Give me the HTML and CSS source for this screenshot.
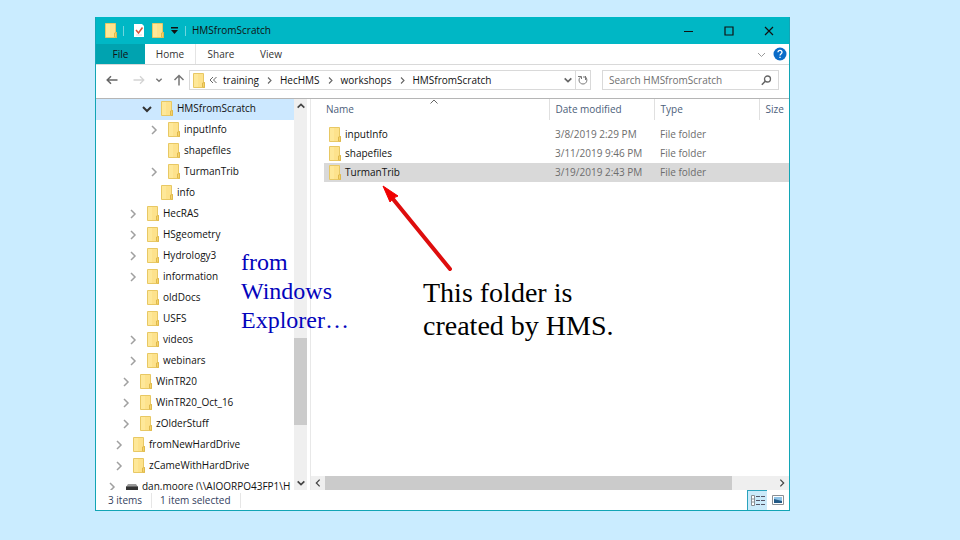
FILE: index.html
```html
<!DOCTYPE html>
<html lang="en">
<head>
<meta charset="utf-8">
<title>HMSfromScratch</title>
<link rel="stylesheet" href="styles.css">
</head>
<body>
<svg class="defs" aria-hidden="true">
  <symbol id="folder" viewBox="0 0 12 15">
    <path d="M.5 .5H10.5V9.500H11.500V14.500H.5Z" fill="#fde28c" stroke="#e8c864"/>
    <path d="M1 1H5V14H1Z" fill="#fee899"/>
    <path d="M9.500 14V10L11.500 9.500V14.500Z" fill="#f7d56c" stroke="#dfb94c"/>
  </symbol>
  <symbol id="right" viewBox="0 0 12 12"><path d="M4 2L8 6L4 10" fill="none" stroke="currentColor" stroke-width="1.500"/></symbol>
  <symbol id="down" viewBox="0 0 12 12"><path d="M2 4L6 8L10 4" fill="none" stroke="currentColor" stroke-width="2"/></symbol>
</svg>
<main class="window">
  <header class="titlebar">
    <svg class="folder"><use href="#folder"/></svg>
    <span class="bar"></span>
    <button class="quick" aria-label="Properties"><svg width="10" height="13" viewBox="0 0 10 13"><path d="M0 0H8L10 2V13H0Z" fill="#fff"/><path d="M2 6L4.500 9L8.500 3.500" fill="none" stroke="#d8563c" stroke-width="1.500"/><path d="M2 11H8" stroke="#ddd"/></svg></button>
    <button class="quick" aria-label="New folder"><svg class="folder"><use href="#folder"/></svg></button>
    <button class="quick more" aria-label="Customize toolbar"><svg width="7" height="7" viewBox="0 0 7 7"><path d="M0 0H7V1.500H0ZM0 3H7L3.500 7Z" fill="#111"/></svg></button>
    <span class="bar"></span>
    <h1>HMSfromScratch</h1>
    <div class="controls">
      <button aria-label="Minimize"><svg width="10" height="10" viewBox="0 0 10 10"><path d="M0 5.500H9" stroke="#111"/></svg></button>
      <button aria-label="Maximize"><svg width="10" height="10" viewBox="0 0 10 10"><path d="M1 1H9V9H1Z" fill="none" stroke="#111" stroke-width="1.200"/></svg></button>
      <button aria-label="Close"><svg width="10" height="10" viewBox="0 0 10 10"><path d="M1 1L9 9M9 1L1 9" stroke="#111" stroke-width="1.200"/></svg></button>
    </div>
  </header>

  <nav class="tabs" aria-label="Ribbon">
    <button class="tab file">File</button>
    <button class="tab home">Home</button>
    <button class="tab">Share</button>
    <button class="tab">View</button>
    <button class="expand" aria-label="Expand ribbon"><svg width="9" height="9" viewBox="0 0 9 9"><path d="M1 3L4.500 6.500L8 3" fill="none" stroke="#999"/></svg></button>
    <button class="help" aria-label="Help"><svg width="14" height="14" viewBox="0 0 14 14"><circle cx="7" cy="7" r="6.500" fill="#0a6cc8"/><path d="M5 5.200C5 2.700 9 2.700 9 5.200C9 6.600 7 6.800 7 8.600M7 9.700V11" fill="none" stroke="#fff" stroke-width="1.300"/></svg></button>
  </nav>

  <div class="address-row">
    <div class="history">
      <button aria-label="Back"><svg width="12" height="12" viewBox="0 0 12 12"><path d="M11.500 6H1.500M5 2.200L1.200 6L5 9.800" fill="none" stroke="#666" stroke-width="1.500"/></svg></button>
      <button aria-label="Forward"><svg width="12" height="12" viewBox="0 0 12 12"><path d="M.5 6H10.500M7 2.200L10.800 6L7 9.800" fill="none" stroke="#d4d4d4" stroke-width="1.300"/></svg></button>
      <button aria-label="Recent" class="recent"><svg width="8" height="8" viewBox="0 0 12 12"><use href="#down"/></svg></button>
      <button aria-label="Up"><svg width="12" height="12" viewBox="0 0 12 12"><path d="M6 11.500V1.500M1.500 6L6 1.500L10.500 6" fill="none" stroke="#777" stroke-width="1.500"/></svg></button>
    </div>
    <div class="address">
      <svg class="folder"><use href="#folder"/></svg>
      <svg class="ellipsis" width="8" height="8" viewBox="0 0 8 8"><path d="M4 1L1 4L4 7M7.500 1L4.500 4L7.500 7" fill="none" stroke="#666"/></svg>
      <a href="#">training</a><svg class="crumb"><use href="#right"/></svg>
      <a href="#">HecHMS</a><svg class="crumb"><use href="#right"/></svg>
      <a href="#">workshops</a><svg class="crumb"><use href="#right"/></svg>
      <a href="#">HMSfromScratch</a>
      <button class="drop" aria-label="Previous locations"><svg width="10" height="10"><use href="#down"/></svg></button>
      <button class="refresh" aria-label="Refresh"><svg width="10" height="10" viewBox="0 0 10 10"><path d="M3 1.500C-.5 4 1 9 5 9C9 9 10 4 7.500 2H5M7.500 1V5M0 1.500H3.500V4" fill="none" stroke="#777"/></svg></button>
    </div>
    <div class="search">
      <input type="text" aria-label="Search" placeholder="Search HMSfromScratch">
      <svg width="11" height="11" viewBox="0 0 11 11"><circle cx="6.500" cy="4" r="3" fill="none" stroke="#666" stroke-width="1.300"/><path d="M4.500 6L.8 9.800" stroke="#666" stroke-width="1.600"/></svg>
    </div>
  </div>

  <div class="panes">
    <ul class="tree">
      <li class="l5 current"><svg class="chev"><use href="#down"/></svg><svg class="folder"><use href="#folder"/></svg>HMSfromScratch</li>
      <li class="l6"><svg class="chev"><use href="#right"/></svg><svg class="folder"><use href="#folder"/></svg>inputInfo</li>
      <li class="l6"><svg class="chev"></svg><svg class="folder"><use href="#folder"/></svg>shapefiles</li>
      <li class="l6"><svg class="chev"><use href="#right"/></svg><svg class="folder"><use href="#folder"/></svg>TurmanTrib</li>
      <li class="l5"><svg class="chev"></svg><svg class="folder"><use href="#folder"/></svg>info</li>
      <li class="l3"><svg class="chev"><use href="#right"/></svg><svg class="folder"><use href="#folder"/></svg>HecRAS</li>
      <li class="l3"><svg class="chev"><use href="#right"/></svg><svg class="folder"><use href="#folder"/></svg>HSgeometry</li>
      <li class="l3"><svg class="chev"><use href="#right"/></svg><svg class="folder"><use href="#folder"/></svg>Hydrology3</li>
      <li class="l3"><svg class="chev"><use href="#right"/></svg><svg class="folder"><use href="#folder"/></svg>information</li>
      <li class="l3"><svg class="chev"></svg><svg class="folder"><use href="#folder"/></svg>oldDocs</li>
      <li class="l3"><svg class="chev"></svg><svg class="folder"><use href="#folder"/></svg>USFS</li>
      <li class="l3"><svg class="chev"><use href="#right"/></svg><svg class="folder"><use href="#folder"/></svg>videos</li>
      <li class="l3"><svg class="chev"><use href="#right"/></svg><svg class="folder"><use href="#folder"/></svg>webinars</li>
      <li class="l2"><svg class="chev"><use href="#right"/></svg><svg class="folder"><use href="#folder"/></svg>WinTR20</li>
      <li class="l2"><svg class="chev"><use href="#right"/></svg><svg class="folder"><use href="#folder"/></svg>WinTR20_Oct_16</li>
      <li class="l2"><svg class="chev"><use href="#right"/></svg><svg class="folder"><use href="#folder"/></svg>zOlderStuff</li>
      <li class="l1"><svg class="chev"><use href="#right"/></svg><svg class="folder"><use href="#folder"/></svg>fromNewHardDrive</li>
      <li class="l1"><svg class="chev"><use href="#right"/></svg><svg class="folder"><use href="#folder"/></svg>zCameWithHardDrive</li>
      <li class="l0"><svg class="chev"><use href="#right"/></svg><svg class="drive" viewBox="0 0 12 6"><path d="M2 0H10L12 3H0Z" fill="#999"/><path d="M0 2.500H12V6H0Z" fill="#333"/></svg>dan.moore (\\AIOORPO43FP1\H</li>
    </ul>
    <div class="vscroll">
      <button aria-label="Scroll up"><svg class="flip" width="10" height="10"><use href="#down"/></svg></button>
      <span class="v-before"></span><span class="v-thumb"></span><span class="v-after"></span>
      <button aria-label="Scroll down"><svg width="10" height="10"><use href="#down"/></svg></button>
    </div>
    <section class="files">
      <table>
        <colgroup><col class="c-name"><col class="c-date"><col class="c-type"><col class="c-size"></colgroup>
        <thead><tr><th>Name<svg class="sort" width="8" height="5" viewBox="0 0 8 5"><path d="M.5 4.500L4 1L7.500 4.500" fill="none" stroke="#666"/></svg></th><th>Date modified</th><th>Type</th><th>Size</th></tr></thead>
        <tbody>
          <tr><td><span class="entry"><svg class="folder"><use href="#folder"/></svg>inputInfo</span></td><td>3/8/2019 2:29 PM</td><td>File folder</td><td></td></tr>
          <tr><td><span class="entry"><svg class="folder"><use href="#folder"/></svg>shapefiles</span></td><td>3/11/2019 9:46 PM</td><td>File folder</td><td></td></tr>
          <tr class="selected"><td><span class="entry"><svg class="folder"><use href="#folder"/></svg>TurmanTrib</span></td><td>3/19/2019 2:43 PM</td><td>File folder</td><td></td></tr>
        </tbody>
      </table>
      <div class="hscroll">
        <button aria-label="Scroll left"><svg class="flip" width="10" height="10"><use href="#right"/></svg></button>
        <span class="h-thumb"></span><span class="h-after"></span>
        <button aria-label="Scroll right"><svg width="10" height="10"><use href="#right"/></svg></button>
      </div>
    </section>
  </div>

  <footer class="status">
    <span class="count">3 items</span><span class="picked">1 item selected</span>
    <button class="view on" aria-label="Details view"><svg width="14" height="11" viewBox="0 0 14 11"><path d="M.5 .5H3.500V10.500H.5ZM.5 4H3.500M.5 7H3.500" fill="#fff" stroke="#8a8f94"/><path d="M5 1.500H14M5 5.500H14M5 9.500H14" stroke="#556" stroke-dasharray="4 1"/></svg></button>
    <button class="view" aria-label="Thumbnail view"><svg width="12" height="10" viewBox="0 0 12 10"><path d="M.5 .5H11.500V9.500H.5Z" fill="#fff" stroke="#8a8f94"/><path d="M2 2H10V8H2Z" fill="#8fc4e8"/><path d="M2 4L6 5L10 6V8H2Z" fill="#245a86"/></svg></button>
  </footer>

  <p class="note source">from<br>Windows<br>Explorer…</p>
  <p class="note remark">This folder is<br>created by HMS.</p>
  <svg class="arrow" width="72" height="88" viewBox="0 0 72 88" aria-hidden="true"><path d="M10 13L67 83" stroke="#de0d0d" stroke-width="4" stroke-linecap="round"/><path d="M0 0L15 10Q10 11 7 16Z" fill="#f00000" stroke="#f00000"/></svg>
</main>
</body>
</html>
```
FILE: styles.css
```css
* { box-sizing: border-box; }

body {
  margin: 0;
  height: 100vh;
  padding: 17px 170px 29px 95px;
  background: #caecff;
  color: #111;
  font: 10px/15px "Open Sans", "Noto Sans", sans-serif;
}

.defs { position: absolute; width: 0; height: 0; }
svg { flex: none; overflow: visible; }
h1, p, ul { margin: 0; padding: 0; }
a { color: inherit; text-decoration: none; }

button {
  display: flex;
  align-items: center;
  justify-content: center;
  flex: none;
  margin: 0;
  padding: 0;
  border: 0;
  background: none;
  color: inherit;
  font: inherit;
}

.folder { width: 12px; height: 15px; }

.window {
  position: relative;
  display: flex;
  flex-direction: column;
  height: 100%;
  border: 1px solid #12a5b5;
  border-top: 0;
  background: #fff;
}

.titlebar {
  display: flex;
  align-items: center;
  flex: none;
  height: 27px;
  padding-left: 9px;
  background: #00b7c5;
}
.titlebar .bar { width: 1px; height: 10px; margin: 0 6px; background: #6fd6de; }
.titlebar .quick { margin-left: 4px; margin-right: 4px; }
.titlebar .quick.more { margin: 0 1px 0 3px; }
.titlebar h1 { font-size: 10px; font-weight: 400; }
.controls { display: flex; margin-left: auto; }
.controls button { width: 40px; height: 27px; }

.tabs {
  display: flex;
  flex: none;
  height: 21px;
  border-bottom: 1px solid #d9d9d9;
}
.tab { width: 50px; color: #333; }
.tab.file { width: 49px; background: #00a3b0; color: #111; }
.tab.home { width: 51px; border-right: 1px solid #e4e4e4; }
.expand { margin-left: auto; width: 20px; }
.help { width: 18px; }

.address-row {
  display: flex;
  align-items: center;
  flex: none;
  height: 33px;
  padding: 0 10px 3px;
}
.history { display: flex; align-items: center; gap: 15px; width: 83px; color: #777; }
.history .recent { margin: 0 -5px; }
.address {
  display: flex;
  align-items: center;
  flex: 1;
  min-width: 0;
  height: 20px;
  padding-left: 3px;
  border: 1px solid #d9d9d9;
}
.ellipsis { margin: 0 6px 0 4px; }
.crumb { width: 9px; height: 9px; margin: 0 6px; color: #666; }
.drop { width: 15px; height: 18px; margin-left: auto; color: #666; }
.refresh { width: 15px; height: 18px; border-left: 1px solid #d9d9d9; }
.search {
  display: flex;
  align-items: center;
  width: 177px;
  height: 20px;
  margin-left: 11px;
  padding: 0 6px;
  border: 1px solid #d9d9d9;
}
.search input {
  flex: 1;
  min-width: 0;
  padding: 0;
  border: 0;
  outline: 0;
  background: none;
  font: inherit;
}
.search input::placeholder { color: #707070; opacity: 1; }

.panes {
  display: flex;
  flex: 1;
  min-height: 0;
  border-top: 1px solid #b5b5b5;
}

.tree {
  width: 198px;
  overflow: hidden;
  list-style: none;
  white-space: nowrap;
}
.tree li { display: flex; align-items: center; height: 21px; padding-bottom: 2px; }
.tree .chev { width: 12px; height: 12px; margin-right: 8px; color: #a0a0a0; }
.tree .folder, .tree .drive { margin-right: 4px; }
.tree .drive { width: 12px; height: 6px; }
.tree .current { background: #cce8ff; }
.tree .current .chev { color: #333; }
.l0 { padding-left: 10px; }
.l1 { padding-left: 17px; }
.l2 { padding-left: 24px; }
.l3 { padding-left: 31px; }
.l5 { padding-left: 45px; }
.l6 { padding-left: 52px; }

.vscroll {
  display: flex;
  flex-direction: column;
  flex: none;
  width: 13px;
  background: #efefef;
  color: #444;
}
.vscroll button { height: 14px; }
.flip { transform: rotate(180deg); }
.v-before { flex: 226; }
.v-thumb { flex: 87; background: #cbcbcb; }
.v-after { flex: 51; }

.files {
  display: flex;
  flex-direction: column;
  flex: 1;
  min-width: 0;
  margin-left: 3px;
  border-left: 1px solid #e8e8e8;
}
table { width: 100%; table-layout: fixed; border-collapse: collapse; }
.c-date, .c-type { width: 105px; }
.c-size { width: 30px; }
th, td { padding: 0 0 0 6px; text-align: left; white-space: nowrap; color: #6d6d6d; }
th {
  height: 21px;
  border-left: 1px solid #e0e0e0;
  color: #4c607a;
  font-weight: 400;
}
th:first-child { position: relative; padding-left: 15px; border-left: 0; }
.sort { position: absolute; top: 0; left: 50%; }
tbody::before { content: ""; display: block; height: 5px; }
td { height: 19px; }
td:first-child { padding-left: 18px; color: #111; }
.selected { background: linear-gradient(to right, transparent 13px, #d9d9d9 13px); }
.entry { display: flex; align-items: center; gap: 4px; }

.hscroll {
  display: flex;
  margin-top: auto;
  height: 14px;
  background: #efefef;
  color: #444;
}
.hscroll button { width: 14px; }
.h-thumb { flex: 407; background: #cbcbcb; }
.h-after { flex: 43; }

.status {
  display: flex;
  align-items: center;
  flex: none;
  height: 20px;
  padding-left: 12px;
  color: #33415e;
}
.count, .picked { padding-right: 9px; border-right: 1px solid #e6e6e6; }
.picked { margin-right: auto; padding-left: 8px; }
.view { width: 22px; height: 20px; }
.view.on { width: 20px; border: 1px solid #2aa3bd; border-width: 1px 0 0 1px; background: #cbeafa; }

.note { position: absolute; font-family: "Liberation Serif", serif; white-space: nowrap; }
.source { left: 145px; top: 231px; color: #0404bc; font-size: 24px; line-height: 29px; }
.remark { left: 327px; top: 259px; color: #000; font-size: 28px; line-height: 33px; }
.arrow { position: absolute; left: 287px; top: 169px; }
```
